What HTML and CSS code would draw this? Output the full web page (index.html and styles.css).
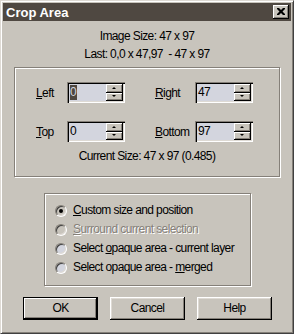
FILE: index.html
```html
<!DOCTYPE html>
<html lang="en">
<head>
    <meta charset="UTF-8">
    <title>Crop Area</title>
    <link rel="stylesheet" href="styles.css">
</head>
<body>
    <div class="window">
        <div class="titlebar">
            <span class="title">Crop Area</span>
            <span class="close">
                <svg width="8" height="7" viewBox="0 0 8 7"><path d="M0 0h2l2 2 2-2h2v1l-2.5 2.5L8 6v1H6L4 5 2 7H0V6l2.5-2.5L0 1z" fill="#000"/></svg>
            </span>
        </div>
        <div class="content">
            <p class="info">Image Size: 47 x 97</p>
            <p class="info">Last: 0,0 x 47,97&nbsp; - 47 x 97</p>

            <div class="group coords">
                <div class="fields">
                    <label class="lbl"><u>L</u>eft</label>
                    <div class="spin">
                        <span class="val"><span class="sel">0</span></span>
                        <span class="arrows"><span class="arr"><i class="up"></i></span><span class="arr"><i class="down"></i></span></span>
                    </div>
                    <label class="lbl"><u>R</u>ight</label>
                    <div class="spin">
                        <span class="val">47</span>
                        <span class="arrows"><span class="arr"><i class="up"></i></span><span class="arr"><i class="down"></i></span></span>
                    </div>
                    <label class="lbl"><u>T</u>op</label>
                    <div class="spin">
                        <span class="val">0</span>
                        <span class="arrows"><span class="arr"><i class="up"></i></span><span class="arr"><i class="down"></i></span></span>
                    </div>
                    <label class="lbl"><u>B</u>ottom</label>
                    <div class="spin">
                        <span class="val">97</span>
                        <span class="arrows"><span class="arr"><i class="up"></i></span><span class="arr"><i class="down"></i></span></span>
                    </div>
                </div>
                <p class="info current">Current Size: 47 x 97 (0.485)</p>
            </div>

            <div class="group options">
                <div class="radio-row"><span class="radio checked gray"></span><span><u>C</u>ustom size and position</span></div>
                <div class="radio-row disabled"><span class="radio gray"></span><span><u>S</u>urround current selection</span></div>
                <div class="radio-row"><span class="radio"></span><span>Select <u>o</u>paque area - current layer</span></div>
                <div class="radio-row"><span class="radio"></span><span>Select opaque area - <u>m</u>erged</span></div>
            </div>

            <div class="buttons">
                <span class="btn default">OK</span>
                <span class="btn">Cancel</span>
                <span class="btn">Help</span>
            </div>
        </div>
    </div>
</body>
</html>
```

FILE: styles.css
```css
body { margin: 0; font-family: "Liberation Sans", Arial, sans-serif; font-size: 12px; letter-spacing: -0.6px; color: #000; background: #c8c4bc; }
.window { width: 294px; height: 334px; box-sizing: border-box; padding: 2px; background: #c8c4bc; border: 1px solid; border-color: #dedad4 #404040 #404040 #dedad4; box-shadow: inset 1px 1px #fff, inset -1px -1px #858079; }
.titlebar { height: 18px; background: #4f4841; display: flex; align-items: center; justify-content: space-between; padding: 0 2px 0 3px; }
.title { color: #fff; font-weight: bold; font-size: 13px; letter-spacing: 0; }
.close { width: 16px; height: 14px; box-sizing: border-box; background: #c8c4bc; display: flex; align-items: center; justify-content: center; box-shadow: inset -1px -1px #000, inset 1px 1px #fff, inset -2px -2px #858079; padding: 0 1px 1px 0; }
.close svg { display: block; }
.content { padding-top: 8px; }
.info { margin: 0; text-align: center; line-height: 14px; height: 14px; }
.info + .info { margin-top: 4px; }

.group { box-sizing: border-box; border: 1px solid #858079; box-shadow: 1px 1px 0 #fff, inset 1px 1px #fff; }
.coords { margin: 6px 0 0 11px; width: 266px; height: 110px; padding: 14px 0 0 21px; }
.fields { display: grid; grid-template-columns: 31px 88px 40px 58px; row-gap: 18px; align-items: center; }
.lbl { line-height: 14px; }
.current { margin: 7px 0 0 -21px; }

.spin { width: 58px; height: 21px; box-sizing: border-box; padding: 2px; display: flex; background: #d3d5de; box-shadow: inset 1px 1px #858079, inset 2px 2px #000, inset -1px -1px #fff, inset -2px -2px #dedad4; }
.val { flex: 1; line-height: 17px; padding-left: 1px; }
.sel { background: #4f4841; color: #d3d5de; display: inline-block; line-height: 15px; padding: 0 1px 0 0; }
.arrows { width: 17px; display: flex; flex-direction: column; }
.arr { flex: 1; background: #c8c4bc; display: flex; align-items: center; justify-content: center; box-shadow: inset -1px -1px #000, inset 1px 1px #fff, inset -2px -2px #858079; }
.arr i { width: 0; height: 0; border: 2px solid transparent; margin: 0 1px 1px 0; }
.arr .up { border-top: 0; border-bottom-color: #000; }
.arr .down { border-bottom: 0; border-top-color: #000; }

.options { margin: 16px 0 0 41px; width: 207px; height: 93px; padding: 7px 0 0 10px; }
.radio-row { height: 19px; display: flex; align-items: center; gap: 6px; line-height: 19px; }
.radio { width: 12px; height: 12px; box-sizing: border-box; border-radius: 50%; background: #d3d5de; border: 1px solid; border-color: #858079 #fff #fff #858079; box-shadow: inset 1px 1px #404040, inset -1px -1px #dedad4; display: flex; align-items: center; justify-content: center; }
.radio.gray { background: #c8c4bc; }
.radio.checked::after { content: ""; width: 4px; height: 4px; border-radius: 50%; background: #000; }
.disabled span:last-child { color: #858079; text-shadow: 1px 1px #fff; }

.buttons { display: flex; gap: 12px; margin-top: 11px; padding-left: 20px; }
.btn { width: 75px; height: 23px; box-sizing: border-box; display: flex; align-items: center; justify-content: center; padding-bottom: 2px; background: #c8c4bc; box-shadow: inset -1px -1px #000, inset 1px 1px #fff, inset -2px -2px #858079, inset 2px 2px #dedad4; }
.btn.default { border: 1px solid #000; box-shadow: inset -1px -1px #000, inset 1px 1px #fff, inset -2px -2px #858079; }
```
